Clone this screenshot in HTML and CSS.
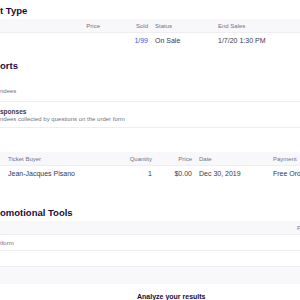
FILE: index.html
```html
<!DOCTYPE html>
<html lang="en">
<head>
    <meta charset="UTF-8">
    <meta name="viewport" content="width=device-width, initial-scale=1.0">
    <title>Event Dashboard</title>
    <link rel="stylesheet" href="styles.css">
</head>
<body>
<div class="page">

    <section class="section tickets">
        <h2 class="section-title">t Type</h2>
        <div class="ticket-table">
            <div class="row head">
                <span></span>
                <span class="num">Price</span>
                <span class="num">Sold</span>
                <span class="left">Status</span>
                <span class="left">End Sales</span>
            </div>
            <div class="row">
                <span></span>
                <span class="num"></span>
                <span class="num link">1/99</span>
                <span class="left">On Sale</span>
                <span class="left">1/7/20 1:30 PM</span>
            </div>
        </div>
    </section>

    <section class="section reports">
        <h2 class="section-title">orts</h2>
        <div class="report-list">
            <div class="report-row first">
                <p class="report-desc">ndees</p>
            </div>
            <div class="report-row">
                <p class="report-name">sponses</p>
                <p class="report-desc">ndees collected by questions on the order form</p>
            </div>
        </div>

        <div class="order-table">
            <div class="row head">
                <span class="left">Ticket Buyer</span>
                <span class="num">Quantity</span>
                <span class="num">Price</span>
                <span class="left">Date</span>
                <span class="left">Payment</span>
            </div>
            <div class="row">
                <span class="left">Jean-Jacques Pisano</span>
                <span class="num">1</span>
                <span class="num">$0.00</span>
                <span class="left">Dec 30, 2019</span>
                <span class="left">Free Order</span>
            </div>
        </div>
    </section>

    <section class="section promo">
        <h2 class="section-title">omotional Tools</h2>
        <div class="promo-table">
            <div class="row head">
                <span></span>
                <span class="left">Performance</span>
            </div>
            <div class="row">
                <span class="muted">tform</span>
                <span></span>
            </div>
            <div class="row">
                <span></span>
                <span></span>
            </div>
            <div class="promo-foot"></div>
        </div>

        <div class="promo-cards">
            <div class="promo-card"></div>
            <div class="promo-card">
                <h3 class="card-title">Analyze your results</h3>
            </div>
        </div>
    </section>

</div>
</body>
</html>
```

FILE: styles.css
```css
body {
    margin: 0;
    padding: 0;
    background: #ffffff;
    font-family: 'Liberation Sans', Arial, sans-serif;
    color: #39364f;
}

.page {
    width: 300px;
    height: 300px;
    overflow: hidden;
}

p, h2, h3 {
    margin: 0;
}

.section-title {
    font-size: 9.5px;
    line-height: 12px;
    font-weight: bold;
    color: #1e0a3c;
    white-space: nowrap;
}

.tickets .section-title {
    margin-top: 5px;
    margin-bottom: 2px;
}

.reports .section-title {
    margin-top: 12px;
}

.promo .section-title {
    margin-top: 26px;
    margin-bottom: 2px;
}

/* shared table rows */
.row {
    display: grid;
    align-items: center;
    height: 15px;
    font-size: 7px;
    white-space: nowrap;
}

.row.head {
    height: 13px;
    background-color: #f8f7fa;
    border-bottom: 1px solid #eeedf2;
    font-size: 6px;
    color: #6f7287;
}

.row span {
    overflow: visible;
}

.num {
    text-align: right;
}

.link {
    color: #3659e3;
}

.muted {
    font-size: 6px;
    color: #6f7287;
}

.ticket-table .row {
    grid-template-columns: 60px 44px 48px 62px 1fr;
}

.ticket-table .num {
    padding-right: 4px;
}

.ticket-table .left:nth-child(4) {
    padding-left: 3px;
}

.ticket-table .left:nth-child(5) {
    padding-left: 4px;
}

/* reports list */
.report-row {
    padding: 6px 0 4px;
    border-bottom: 1px solid #eeedf2;
}

.report-row.first {
    padding: 16px 0 6px;
}

.report-name {
    font-size: 6.5px;
    line-height: 8px;
    font-weight: bold;
    color: #39364f;
}

.report-desc {
    font-size: 6px;
    line-height: 7px;
    color: #6f7287;
    white-space: nowrap;
}

.order-table {
    margin-top: 24px;
}

.order-table .row {
    grid-template-columns: 112px 34px 40px 76px 1fr;
    padding-left: 8px;
}

.order-table .num {
    padding-right: 2px;
}

.order-table .left:nth-child(4) {
    padding-left: 5px;
}

.order-table .left:nth-child(5) {
    padding-left: 3px;
}

/* promotional tools */
.promo-table .row {
    grid-template-columns: 297px 1fr;
    border-bottom: 1px solid #eeedf2;
}

.promo-foot {
    height: 17px;
    background-color: #f8f7fa;
}

.promo-cards {
    display: grid;
    grid-template-columns: 137px 1fr;
    margin-top: 8px;
}

.card-title {
    font-size: 7px;
    line-height: 9px;
    font-weight: bold;
    color: #1e0a3c;
    white-space: nowrap;
}
```
